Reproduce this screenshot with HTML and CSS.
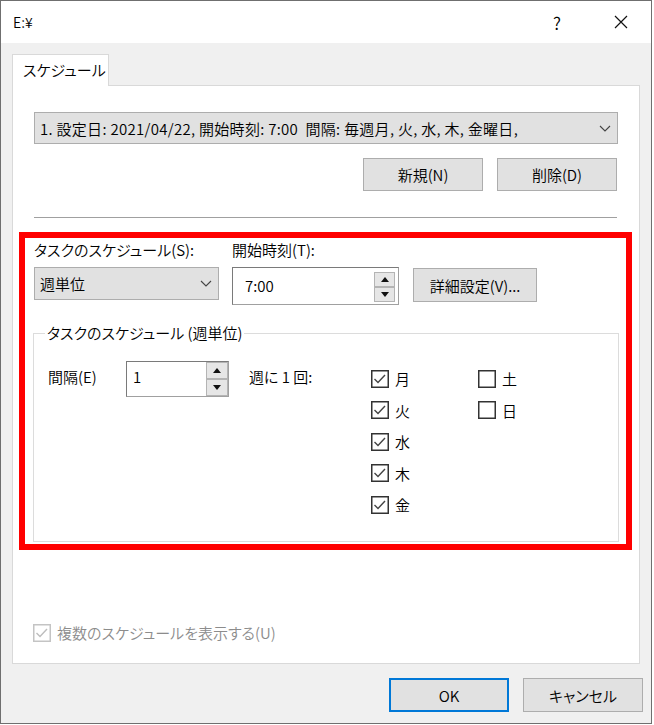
FILE: index.html
```html
<!DOCTYPE html>
<html lang="ja">
<head>
<meta charset="utf-8">
<title>E:¥</title>
<link rel="stylesheet" href="styles.css">
</head>
<body>
<div class="window">
  <div class="titlebar">
    <span class="title">E:¥</span>
    <span class="ctl help">?</span>
    <span class="ctl close"><svg width="14" height="14" viewBox="0 0 14 14"><path d="M1 1 L13 13 M13 1 L1 13" stroke="#111" stroke-width="1.2" fill="none"/></svg></span>
  </div>
  <div class="body">
    <div class="tabs"><div class="tab">スケジュール</div></div>
    <div class="panel">
      <div class="upper">
        <div class="combo wide">
          <span class="combo-text">1. 設定日: 2021/04/22, 開始時刻: 7:00  間隔: 毎週月, 火, 水, 木, 金曜日,</span>
          <svg class="chev" width="12" height="7" viewBox="0 0 12 7"><path d="M1 1 L6 6 L11 1" stroke="#444" stroke-width="1.1" fill="none"/></svg>
        </div>
        <div class="btnrow">
          <button class="btn">新規(N)</button>
          <button class="btn">削除(D)</button>
        </div>
        <div class="sep"></div>
      </div>
      <div class="highlight">
        <div class="topgrid">
          <span class="lbl">タスクのスケジュール(S):</span>
          <span class="lbl">開始時刻(T):</span>
          <span></span>
          <div class="combo sched">
            <span class="combo-text">週単位</span>
            <svg class="chev" width="12" height="7" viewBox="0 0 12 7"><path d="M1 1 L6 6 L11 1" stroke="#444" stroke-width="1.1" fill="none"/></svg>
          </div>
          <div class="spin time">
            <span class="spin-text">7:00</span>
            <div class="spinbtns">
              <span class="sbtn"><svg width="8" height="5" viewBox="0 0 8 5"><path d="M0 5 L4 0 L8 5 Z" fill="#111"/></svg></span>
              <span class="sbtn"><svg width="8" height="5" viewBox="0 0 8 5"><path d="M0 0 L8 0 L4 5 Z" fill="#111"/></svg></span>
            </div>
          </div>
          <button class="btn adv">詳細設定(V)...</button>
        </div>
        <fieldset class="group">
          <legend>タスクのスケジュール (週単位)</legend>
          <div class="weekly">
            <span class="lbl interval">間隔(E)</span>
            <div class="spin num">
              <span class="spin-text">1</span>
              <div class="spinbtns">
                <span class="sbtn"><svg width="8" height="5" viewBox="0 0 8 5"><path d="M0 5 L4 0 L8 5 Z" fill="#111"/></svg></span>
                <span class="sbtn"><svg width="8" height="5" viewBox="0 0 8 5"><path d="M0 0 L8 0 L4 5 Z" fill="#111"/></svg></span>
              </div>
            </div>
            <span class="lbl per">週に 1 回:</span>
            <div class="days">
              <label class="day"><svg class="cb" width="18" height="18" viewBox="0 0 18 18"><rect x="0.75" y="0.75" width="16.5" height="16.5" fill="#fff" stroke="#333" stroke-width="1.5"/><path d="M3.5 9 L7 12.5 L14 5" stroke="#444" stroke-width="1.4" fill="none"/></svg>月</label>
              <label class="day"><svg class="cb" width="18" height="18" viewBox="0 0 18 18"><rect x="0.75" y="0.75" width="16.5" height="16.5" fill="#fff" stroke="#333" stroke-width="1.5"/><path d="M3.5 9 L7 12.5 L14 5" stroke="#444" stroke-width="1.4" fill="none"/></svg>火</label>
              <label class="day"><svg class="cb" width="18" height="18" viewBox="0 0 18 18"><rect x="0.75" y="0.75" width="16.5" height="16.5" fill="#fff" stroke="#333" stroke-width="1.5"/><path d="M3.5 9 L7 12.5 L14 5" stroke="#444" stroke-width="1.4" fill="none"/></svg>水</label>
              <label class="day"><svg class="cb" width="18" height="18" viewBox="0 0 18 18"><rect x="0.75" y="0.75" width="16.5" height="16.5" fill="#fff" stroke="#333" stroke-width="1.5"/><path d="M3.5 9 L7 12.5 L14 5" stroke="#444" stroke-width="1.4" fill="none"/></svg>木</label>
              <label class="day"><svg class="cb" width="18" height="18" viewBox="0 0 18 18"><rect x="0.75" y="0.75" width="16.5" height="16.5" fill="#fff" stroke="#333" stroke-width="1.5"/><path d="M3.5 9 L7 12.5 L14 5" stroke="#444" stroke-width="1.4" fill="none"/></svg>金</label>
              <label class="day"><svg class="cb" width="18" height="18" viewBox="0 0 18 18"><rect x="0.75" y="0.75" width="16.5" height="16.5" fill="#fff" stroke="#333" stroke-width="1.5"/></svg>土</label>
              <label class="day"><svg class="cb" width="18" height="18" viewBox="0 0 18 18"><rect x="0.75" y="0.75" width="16.5" height="16.5" fill="#fff" stroke="#333" stroke-width="1.5"/></svg>日</label>
            </div>
          </div>
        </fieldset>
      </div>
      <label class="multi"><svg class="cb" width="18" height="18" viewBox="0 0 18 18"><rect x="0.75" y="0.75" width="16.5" height="16.5" fill="#fff" stroke="#c4c4c4" stroke-width="1.5"/><path d="M3.5 9 L7 12.5 L14 5" stroke="#bdbdbd" stroke-width="1.4" fill="none"/></svg>複数のスケジュールを表示する(U)</label>
    </div>
    <div class="footer">
      <button class="btn ok">OK</button>
      <button class="btn">キャンセル</button>
    </div>
  </div>
</div>
</body>
</html>
```

FILE: styles.css
```css
html, body {
  margin: 0;
  padding: 0;
  background: #ffffff;
}

body {
  font-family: "Noto Sans CJK JP", "Noto Sans", sans-serif;
  font-size: 15px;
  font-weight: 350;
  font-feature-settings: "palt";
  color: #000;
}

.window {
  width: 652px;
  height: 724px;
  box-sizing: border-box;
  border: 1px solid #6f6f6f;
  display: flex;
  flex-direction: column;
  background: #f0f0f0;
}

.titlebar {
  height: 42px;
  flex: none;
  background: #fff;
  display: flex;
  align-items: center;
  padding-left: 12px;
  padding-right: 7px;
}

.title {
  font-size: 14px;
}

.ctl {
  width: 46px;
  display: flex;
  justify-content: center;
  align-items: center;
}

.help {
  margin-left: auto;
  font-size: 17px;
}

.close {
  margin-left: 18px;
}

.body {
  flex: 1;
  padding: 11px 8px 0 11px;
  display: flex;
  flex-direction: column;
}

.tabs {
  display: flex;
}

.tab {
  width: 97px;
  height: 32px;
  box-sizing: border-box;
  border: 1px solid #d9d9d9;
  border-bottom: none;
  background: #fff;
  padding-left: 10px;
  line-height: 30px;
  position: relative;
  z-index: 1;
  margin-bottom: -1px;
}

.panel {
  width: 628px;
  height: 579px;
  box-sizing: border-box;
  border: 1px solid #d9d9d9;
  background: #fff;
  padding: 26px 7px 0 6px;
  display: flex;
  flex-direction: column;
}

.upper {
  margin: 0 13px 0 15px;
}

.combo {
  box-sizing: border-box;
  border: 1px solid #adadad;
  background: #e1e1e1;
  display: flex;
  align-items: center;
  padding: 0 6px 0 5px;
}

.combo-text {
  flex: 1;
  white-space: pre;
  overflow: hidden;
}

.wide {
  width: 584px;
  height: 32px;
}

.wide .combo-text {
  letter-spacing: 0.3px;
}

.btnrow {
  display: flex;
  justify-content: flex-end;
  gap: 14px;
  margin-top: 14px;
  padding-right: 2px;
}

.btn {
  font: inherit;
  font-feature-settings: "palt";
  color: #000;
  width: 120px;
  height: 33px;
  box-sizing: border-box;
  border: 1px solid #adadad;
  background: #e1e1e1;
  padding: 0;
  margin: 0;
}

.sep {
  margin-top: 26px;
  width: 583px;
  border-top: 1px solid #a0a0a0;
}

.highlight {
  margin-top: 14px;
  border: 6px solid #ff0000;
  padding: 2px 0 0 0;
  height: 318px;
  box-sizing: border-box;
}

.topgrid {
  display: grid;
  grid-template-columns: 185px 167px 124px;
  column-gap: 13px;
  row-gap: 7px;
  padding-left: 9px;
  align-items: start;
}

.lbl {
  line-height: 20px;
  white-space: nowrap;
}

.sched {
  height: 33px;
}

.spin {
  box-sizing: border-box;
  border: 1px solid #a0a0a0;
  border-top-color: #7a7a7a;
  border-left-color: #7a7a7a;
  background: #fff;
  display: flex;
}

.spin-text {
  flex: 1;
  line-height: 20px;
}

.spinbtns {
  display: flex;
  flex-direction: column;
}

.sbtn {
  flex: 1;
  box-sizing: border-box;
  border: 1px solid #b4b4b4;
  background: #e6e6e6;
  display: flex;
  align-items: center;
  justify-content: center;
}

.time {
  width: 167px;
  height: 38px;
  align-items: center;
  padding: 0 3px 0 12px;
}

.time .spinbtns {
  width: 21px;
  height: 30px;
  margin-top: 2px;
}

.adv {
  width: 124px;
  height: 34px;
  margin-top: 1px;
  margin-left: 1px;
}

.group {
  margin: 18px 7px 0 8px;
  padding: 0 0 20px 14px;
  border: 1px solid #dcdcdc;
  min-width: 0;
}

.group legend {
  padding: 0 2px;
  margin-left: -3px;
  line-height: 20px;
}

.weekly {
  display: flex;
  align-items: flex-start;
  margin-top: 18px;
}

.interval {
  width: 78px;
  margin-top: 6px;
}

.num {
  width: 103px;
  height: 36px;
  padding: 5px 0 0 6px;
}

.num .spinbtns {
  width: 22px;
  height: 34px;
  margin-top: -5px;
}

.per {
  width: 122px;
  margin-left: 20px;
  margin-top: 6px;
}

.days {
  display: grid;
  grid-template-rows: repeat(5, 31.5px);
  grid-auto-flow: column;
  grid-template-columns: 107px auto;
  margin-top: 2px;
}

.day {
  display: flex;
  align-items: center;
  gap: 6px;
}

.cb {
  flex: none;
}

.multi {
  margin-top: auto;
  margin-left: 14px;
  margin-bottom: 20px;
  display: flex;
  align-items: center;
  gap: 6px;
  color: #8c8c8c;
}

.footer {
  display: flex;
  justify-content: flex-end;
  gap: 14px;
  margin-top: 14px;
}

.footer .btn {
  height: 34px;
}

.ok {
  border: 2px solid #0078d7;
}
```
